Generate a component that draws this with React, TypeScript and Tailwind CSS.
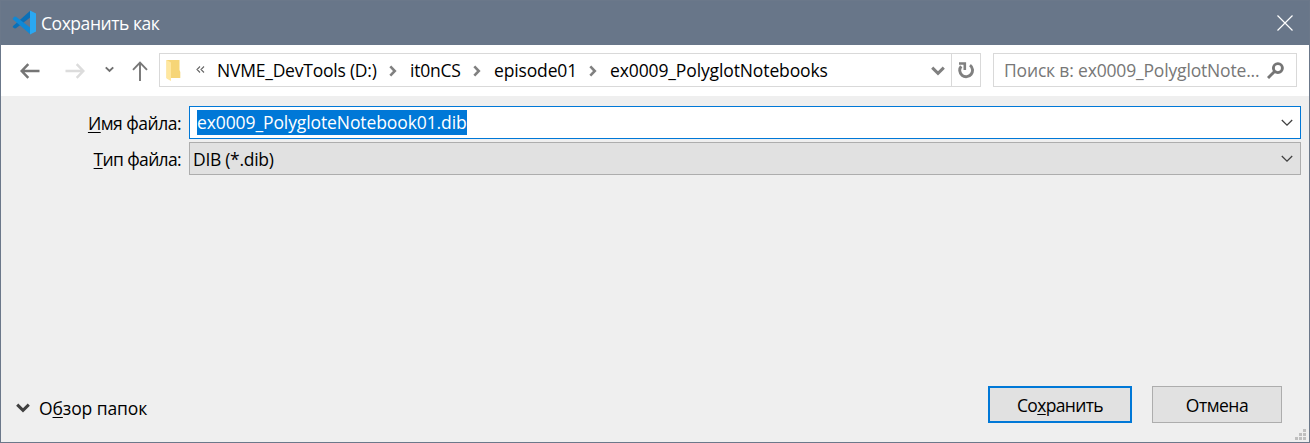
import React from "react";

type TextProps = { children: React.ReactNode; className?: string };

const Text = ({ children, className = "" }: TextProps) => (
  <span className={`block shrink-0 whitespace-pre leading-6 ${className}`}>{children}</span>
);

const Key = ({ children }: { children: React.ReactNode }) => (
  <span className="underline decoration-1 underline-offset-2">{children}</span>
);

const CodeLogo = () => (
  <svg className="ml-[11px] mt-[9px] h-[25px] w-[25px] shrink-0" viewBox="0 0 25 25">
    <path d="M0.8 16.2 18.5 0.4V7.2L4 18.3 2.8 18.5 0.8 17.2Z" fill="#0a70b8" />
    <path d="M0.8 8.2 2.8 6.6 4 6.8 18.5 17.8V24.6L0.8 9.2Z" fill="#1089d6" />
    <path d="M18 0.5 24 3.5V21.5L18 24.5Z" fill="#2aa8f2" />
  </svg>
);

const Crumb = () => (
  <svg className="mt-px h-[12px] w-[9px] shrink-0" viewBox="0 0 9 12" fill="none" stroke="#808080" strokeWidth="2.6">
    <path d="M1.3 1.3 5.8 6 1.3 10.7" />
  </svg>
);

const ThickChevron = ({ className }: { className: string }) => (
  <svg className={`shrink-0 ${className}`} viewBox="0 0 14 10" fill="none" stroke="currentColor" strokeWidth="3">
    <path d="M1.2 1.6 7 7.3 12.8 1.6" />
  </svg>
);

const ComboChevron = () => (
  <svg className="h-[8px] w-[12px] shrink-0" viewBox="0 0 12 8" fill="none" stroke="#404040" strokeWidth="1.3">
    <path d="M0.8 1 6 6.2 11.2 1" />
  </svg>
);

const Arrow = ({ className }: { className: string }) => (
  <svg className={`h-[16px] w-[20px] shrink-0 ${className}`} viewBox="0 0 20 16" fill="none" stroke="currentColor" strokeWidth="2.5">
    <path d="M1.5 8H19.5M8.3 1.2 1.7 8 8.3 14.8" />
  </svg>
);

const gripCells = [
  [8, 0], [4, 4], [8, 4], [0, 8], [4, 8], [8, 8],
];

export default function App() {
  return (
    <div className="flex h-[443px] w-[1310px] flex-col overflow-hidden border border-[#6b788a] bg-[#efefef] text-[17.5px] text-black [font-family:'Open_Sans','Noto_Sans',sans-serif]">
      <header className="flex h-[44px] shrink-0 bg-[#687689] text-white">
        <CodeLogo />
        <Text className="ml-[4px] mt-[10px] tracking-[-0.45px]">Сохранить как</Text>
        <svg className="ml-auto mr-[16px] mt-[14px] h-[16px] w-[16px]" viewBox="0 0 16 16" stroke="white" strokeWidth="1.2">
          <path d="M0.5 0.5 15.5 15.5M15.5 0.5 0.5 15.5" />
        </svg>
      </header>

      <nav className="flex h-[51px] shrink-0 items-start bg-white pt-[8px]">
        <Arrow className="ml-[19px] mt-[10px] text-[#757575]" />
        <Arrow className="ml-[25px] mt-[10px] rotate-180 text-[#dcdcdc]" />
        <ThickChevron className="ml-[20px] mt-[13px] h-[7px] w-[9px] text-[#707070]" />
        <svg className="ml-[18px] mt-[8px] h-[20px] w-[16px] shrink-0" viewBox="0 0 16 20" fill="none" stroke="#777" strokeWidth="1.9">
          <path d="M8 20V2M1 8.8 8 1.7 15 8.8" />
        </svg>

        <div className="ml-[11px] flex h-[34px] w-[822px] shrink-0 items-center border border-[#d9d9d9]">
          <svg className="ml-[6px] mt-[-1px] h-[22px] w-[15px] shrink-0" viewBox="0 0 15 22">
            <path d="M0.5 1H13.5V11L14.3 13V19H0.5Z" fill="#f6d577" />
            <path d="M0.5 1 5 3.5V22L0.5 19.5Z" fill="#ffe79f" />
          </svg>
          <svg className="ml-[15px] mt-[-1px] h-[7px] w-[9px] shrink-0" viewBox="0 0 9 7" fill="none" stroke="#666" strokeWidth="1.1">
            <path d="M4 0.5 1 3.5 4 6.5M8 0.5 5 3.5 8 6.5" />
          </svg>
          <Text className="ml-[12px] w-[160px] tracking-[-0.22px]">NVME_DevTools (D:)</Text>
          <div className="ml-[12px]"><Crumb /></div>
          <Text className="ml-[12px] w-[51px] tracking-[-0.25px]">it0nCS</Text>
          <div className="ml-[12px]"><Crumb /></div>
          <Text className="ml-[12px] w-[83px] tracking-[-0.14px]">episode01</Text>
          <div className="ml-[12px]"><Crumb /></div>
          <Text className="ml-[12px] tracking-[-0.12px]">ex0009_PolyglotNotebooks</Text>
          <ThickChevron className="ml-auto mr-[6px] mt-[2px] h-[10px] w-[14px] text-[#808080]" />
          <div className="flex h-full w-[29px] items-center justify-center border-l border-[#d9d9d9]">
            <svg className="h-[17px] w-[17px]" viewBox="0 0 17 17" fill="none" stroke="#808080" strokeWidth="2.9">
              <path d="M3.2 4.2A6.4 6.4 0 1 0 12 3.2" />
              <path d="M1 1.5H6.8V8" strokeWidth="2.6" />
            </svg>
          </div>
        </div>

        <div className="ml-[12px] flex h-[34px] w-[304px] shrink-0 items-center border border-[#d9d9d9] text-[#777]">
          <Text className="ml-[10px] tracking-[-0.17px]">Поиск в: ex0009_PolyglotNote...</Text>
          <svg className="ml-auto mr-[12px] h-[17px] w-[17px] shrink-0" viewBox="0 0 17 17" fill="none" stroke="#757575" strokeWidth="2.9">
            <circle cx="10.9" cy="6.1" r="4.5" />
            <path d="M7.8 9.2 1 16" />
          </svg>
        </div>
      </nav>

      <main className="flex min-h-0 grow flex-col pt-[10px]">
        <div className="flex h-[33px] shrink-0">
          <label className="flex w-[180px] items-center justify-end"><Text className="tracking-[-0.5px]"><Key>И</Key>мя файла:</Text></label>
          <div className="ml-[8px] flex w-[1112px] items-center border border-[#0078d7] bg-white">
            <div className="ml-[7px] mt-[-1px] flex h-[25px] w-[270px] items-center bg-[#0078d7] text-white">
              <Text className="mt-[-1px] tracking-[-0.1px]">ex0009_PolygloteNotebook01.dib</Text>
            </div>
            <div className="ml-auto mr-[7px]"><ComboChevron /></div>
          </div>
        </div>
        <div className="mt-[3px] flex h-[33px] shrink-0">
          <label className="flex w-[180px] items-center justify-end"><Text className="tracking-[-0.65px]"><Key>Т</Key>ип файла:</Text></label>
          <div className="ml-[8px] flex w-[1112px] items-center border border-[#adadad] bg-[#e1e1e1]">
            <Text className="ml-[3px] tracking-[-0.3px]">DIB (*.dib)</Text>
            <div className="ml-auto mr-[7px]"><ComboChevron /></div>
          </div>
        </div>

        <footer className="mt-auto flex h-[56px] shrink-0 items-start">
          <ThickChevron className="ml-[15px] mt-[17px] h-[10px] w-[14px] text-[#404040]" />
          <Text className="ml-[9px] mt-[10px] tracking-[-0.1px]">О<Key>б</Key>зор папок</Text>
          <button className="ml-auto flex h-[37px] w-[144px] items-center justify-center border-2 border-[#0078d7] bg-[#e1e1e1]">
            <Text className="tracking-[-0.65px]">Со<Key>х</Key>ранить</Text>
          </button>
          <button className="ml-[20px] flex h-[37px] w-[130px] items-center justify-center border border-[#adadad] bg-[#e1e1e1]">
            <Text className="tracking-[-0.5px]">Отмена</Text>
          </button>
          <svg className="ml-[13px] mr-[3px] mt-[43px] h-[11px] w-[11px] shrink-0" viewBox="0 0 11 11" fill="#bfbfbf">
            {gripCells.map(([x, y]) => <rect key={`${x}-${y}`} x={x} y={y} width="3" height="3" />)}
          </svg>
        </footer>
      </main>
    </div>
  );
}
